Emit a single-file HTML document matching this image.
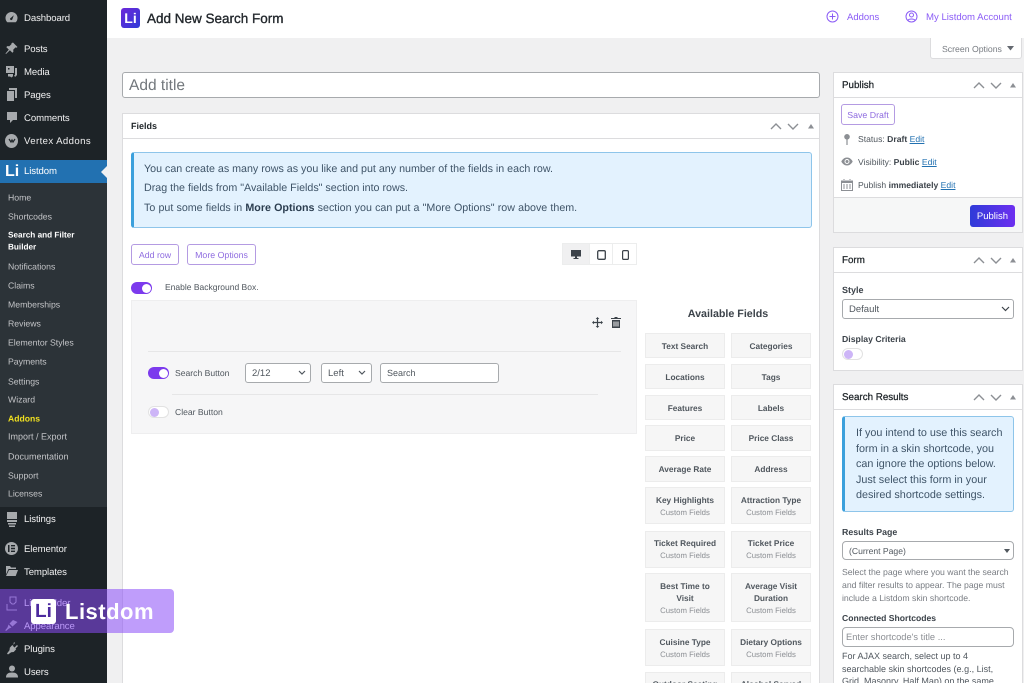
<!DOCTYPE html>
<html><head><meta charset="utf-8"><title>Add New Search Form</title>
<style>
*{box-sizing:border-box}
html,body{margin:0;padding:0;width:1024px;height:683px;overflow:hidden}
body{background:#f0f0f1;font-family:"Liberation Sans",sans-serif;color:#3c434a;text-rendering:geometricPrecision}
#w{position:absolute;left:0;top:0;width:1024px;height:683px;overflow:hidden;background:#f0f0f1;filter:blur(.3px)}
.a,.t{position:absolute}
.t{white-space:nowrap;line-height:14px}
.m{color:#f0f0f1;font-size:9.6px;left:24px;letter-spacing:-.1px;transform:translateY(1px)}
.s{color:#c3c4c7;font-size:8.7px;left:8px;line-height:12px;transform:translateY(.5px)}
.b{background:#fff;border:1px solid #dcdcde}
.pb{position:absolute;background:#fff;border:1px solid #b49be2;border-radius:3px;color:#8f6ce0;font-size:8.800px;text-align:center}
.f{position:absolute;width:80px;background:#f6f6f6;border:1px solid #ececec;text-align:center;font-size:8.300px;font-weight:bold;color:#50575e;line-height:12px}
.f small{display:block;font-weight:normal;font-size:7.800px;color:#8c8f94;margin-top:.7px}
.in{position:absolute;background:#fff;border:1px solid #a7aaad;border-radius:3px;font-size:9.500px;color:#50575e;padding-left:6px}
.ic{position:absolute;fill:#a7aaad}
.ch{position:absolute;fill:none;stroke:#8c8f94;stroke-width:1.4}
.lk{color:#2271b1;text-decoration:underline}
.tg{position:absolute;width:21px;height:12px;border-radius:6px;background:#7c3aed}
.tg i{position:absolute;right:1.5px;top:1.5px;width:9px;height:9px;border-radius:50%;background:#fff}
.tg.off{background:#fff;border:1px solid #e2e2e2}
.tg.off i{left:1px;right:auto;top:1px;background:#cdb5f7}
</style></head><body>
<div id="w">

<!-- Sidebar -->
<div class="a" style="left:0;top:0;width:107px;height:683px;background:#1d2327"></div>
<div class="a" style="left:0;top:183px;width:107px;height:324px;background:#2c3338"></div>
<div class="a" style="left:0;top:160px;width:107px;height:23px;background:#2271b1"></div>
<svg class="a" style="left:101px;top:166px" width="6" height="12"><path d="M6 0L0 6l6 6z" fill="#f0f0f1"/></svg>

<svg class="ic" style="left:5px;top:11px" width="13" height="13" viewBox="0 0 13 13"><path d="M6.500 1a6 6 0 0 0-6 6c0 1.700.7 3.200 1.800 4.300h8.400A6 6 0 0 0 12.500 7a6 6 0 0 0-6-6zm.8 7.500a1.200 1.200 0 1 1-1.300-1.800l2.800-2.500z"/></svg>
<div class="t m" style="top:11px">Dashboard</div>
<svg class="ic" style="left:5px;top:42px" width="13" height="13" viewBox="0 0 13 13"><path d="M8 .5l4.500 4.500-1 .7-1-.3-2.300 2.300.2 2-1 1-2.500-2.500L1 12l-.5-.5 3.300-3.900L1.300 5.100l1-1 2 .2L6.600 2 6.400 1.200z"/></svg>
<div class="t m" style="top:42px">Posts</div>
<svg class="ic" style="left:5px;top:65px" width="13" height="13" viewBox="0 0 13 13"><path d="M1 1h8v7H1zM3 3v1.500h1.500V3zM10 3h2v7l-1.500 1.800L9 11l.7-1H10zM3 9h5v2.200L6.500 12.500 5 11.500H3z"/></svg>
<div class="t m" style="top:65px">Media</div>
<svg class="ic" style="left:6px;top:88px" width="12" height="13" viewBox="0 0 12 13"><path d="M3 0h8v10H9V2H3zM1 3h7v10H1z"/></svg>
<div class="t m" style="top:88px">Pages</div>
<svg class="ic" style="left:6px;top:111px" width="12" height="13" viewBox="0 0 12 13"><path d="M1 1h10v8H7l-3 3V9H1z"/></svg>
<div class="t m" style="top:111px">Comments</div>
<div class="a" style="left:5px;top:134px;width:13px;height:14px;border-radius:50%;background:#a7aaad"></div>
<svg class="a" style="left:8px;top:138px" width="8" height="6"><path d="M1 1l2 3 1-2 1 2 2-3" fill="none" stroke="#1d2327" stroke-width="1.200"/></svg>
<div class="t m" style="top:134px;letter-spacing:.4px">Vertex Addons</div>
<div class="t" style="left:5px;top:163px;color:#fff;font-size:16px;font-weight:bold;line-height:18px">Li</div>
<div class="t m" style="top:164px;color:#fff">Listdom</div>

<div class="t s" style="top:191px">Home</div>
<div class="t s" style="top:210px">Shortcodes</div>
<div class="t s" style="top:229px;color:#fff;font-weight:bold;font-size:8.200px">Search and Filter</div>
<div class="t s" style="top:241px;color:#fff;font-weight:bold;font-size:8.200px">Builder</div>
<div class="t s" style="top:260px">Notifications</div>
<div class="t s" style="top:279px">Claims</div>
<div class="t s" style="top:298px">Memberships</div>
<div class="t s" style="top:317px">Reviews</div>
<div class="t s" style="top:336px">Elementor Styles</div>
<div class="t s" style="top:355px">Payments</div>
<div class="t s" style="top:375px">Settings</div>
<div class="t s" style="top:393px">Wizard</div>
<div class="t s" style="top:412px;color:#f0e020;font-weight:bold;font-size:8.600px">Addons</div>
<div class="t s" style="top:430px;font-size:9px">Import / Export</div>
<div class="t s" style="top:450px;font-size:9px">Documentation</div>
<div class="t s" style="top:469px">Support</div>
<div class="t s" style="top:487px">Licenses</div>

<svg class="ic" style="left:6px;top:512px" width="12" height="15" viewBox="0 0 12 15"><path d="M1 0h10v7H1zM3 2l3 2 3-2v1L6 5 3 3zM1 8h10v2H1zM2 11h8v1.500H2zM3 13.500h6V15H3z"/></svg>
<div class="t m" style="top:512px">Listings</div>
<div class="a" style="left:5px;top:542px;width:13px;height:13px;border-radius:50%;background:#a7aaad"></div>
<svg class="a" style="left:8px;top:545px" width="7" height="7"><path d="M0 0h1.500v7H0zM3 0h4v1.400H3zM3 2.800h4v1.400H3zM3 5.600h4V7H3z" fill="#1d2327"/></svg>
<div class="t m" style="top:542px">Elementor</div>
<svg class="ic" style="left:6px;top:565px" width="12" height="12" viewBox="0 0 12 12"><path d="M0 1h4l1 1.500h5V4H2.500L0 9.500zM3 5h9l-2.300 6H0z"/></svg>
<div class="t m" style="top:565px">Templates</div>
<svg class="ic" style="left:6px;top:596px;fill:none;stroke:#a7aaad" width="12" height="15" viewBox="0 0 12 15"><path d="M4 1h6v5l-2 2H6L4 6zM1 8v6h10"/></svg>
<div class="t m" style="top:596px">LinkBuilder</div>
<svg class="ic" style="left:5px;top:619px" width="13" height="13" viewBox="0 0 13 13"><path d="M12.500 3L8 1 4.500 4.500l3 3zM3.500 5.500l3 3-2.500 1-3 2.500-.7-.7L2.500 8.500z"/></svg>
<div class="t m" style="top:619px">Appearance</div>
<svg class="ic" style="left:6px;top:642px" width="12" height="13" viewBox="0 0 12 13"><path d="M8 0l1 1-2.500 2.500 2 2L11 3l1 1-2.500 2.500.7.700-2.500 2.800-2.500.300L2 12.500 1 11.500l2.500-3.200.3-2.500L6.300 3l.700.700z"/></svg>
<div class="t m" style="top:642px">Plugins</div>
<svg class="ic" style="left:6px;top:665px" width="12" height="13" viewBox="0 0 12 13"><circle cx="6" cy="3.500" r="3"/><path d="M0 12.500c0-3.500 2-5 6-5s6 1.500 6 5z"/></svg>
<div class="t m" style="top:665px">Users</div>

<!-- Top bar -->
<div class="a" style="left:107px;top:0;width:917px;height:38px;background:#fff"></div>
<div class="a" style="left:121px;top:8px;width:19px;height:20px;border-radius:3px;background:linear-gradient(135deg,#6d28d9,#2f3bd8);color:#fff;font-weight:bold;font-size:14px;line-height:20px;text-align:center">Li</div>
<div class="t" style="left:147px;top:10px;font-size:13.500px;line-height:17px;color:#23282d;-webkit-text-stroke:.35px #23282d">Add New Search Form</div>
<svg class="a" style="left:826px;top:10px" width="13" height="13" viewBox="0 0 13 13" fill="none" stroke="#8b5cf6"><circle cx="6.500" cy="6.500" r="5.500"/><path d="M6.500 3.500v6M3.500 6.500h6"/></svg>
<div class="t" style="left:847px;top:11px;font-size:9.500px;color:#8b5cf6">Addons</div>
<svg class="a" style="left:905px;top:10px" width="13" height="13" viewBox="0 0 13 13" fill="none" stroke="#8b5cf6"><circle cx="6.500" cy="6.500" r="5.500"/><circle cx="6.500" cy="5" r="2"/><path d="M2.800 10.500c1-2 6.400-2 7.400 0"/></svg>
<div class="t" style="left:926px;top:11px;font-size:9.600px;color:#8b5cf6">My Listdom Account</div>

<div class="a" style="left:930px;top:38px;width:92px;height:21px;background:#fff;border:1px solid #dcdcde;border-top:0;border-radius:0 0 3px 3px"></div>
<div class="t" style="left:942px;top:42px;font-size:8.700px;color:#787c82">Screen Options</div>
<svg class="a" style="left:1007px;top:46px" width="7" height="5"><path d="M0 0h7L3.500 4.500z" fill="#646970"/></svg>

<!-- Title -->
<div class="a" style="left:122px;top:72px;width:698px;height:26px;background:#fff;border:1px solid #a7aaad;border-radius:3px;font-size:15.500px;line-height:25px;color:#72777c;padding-left:6px">Add title</div>

<!-- Fields box -->
<div class="a b" style="left:122px;top:113px;width:698px;height:580px"></div>
<div class="a" style="left:123px;top:138px;width:696px;height:1px;background:#dcdcde"></div>
<div class="t" style="left:131px;top:119px;font-size:9px;font-weight:bold;color:#1d2327">Fields</div>
<svg class="ch" style="left:770px;top:122px" width="12" height="9"><path d="M1 7l5-5 5 5"/></svg>
<svg class="ch" style="left:787px;top:122px" width="12" height="9"><path d="M1 2l5 5 5-5"/></svg>
<svg class="a" style="left:808px;top:124px" width="6" height="5"><path d="M0 4.500L3 0l3 4.500z" fill="#8c8f94"/></svg>

<div class="a" style="left:131px;top:152px;width:681px;height:76px;background:#e3f2fe;border:1px solid #8ec5ea;border-left:3px solid #3ba0dc;border-radius:3px"></div>
<div class="t" style="left:144px;top:162px;font-size:10.700px;color:#3f5468">You can create as many rows as you like and put any number of the fields in each row.</div>
<div class="t" style="left:144px;top:181px;font-size:10.700px;color:#3f5468">Drag the fields from "Available Fields" section into rows.</div>
<div class="t" style="left:144px;top:201px;font-size:10.700px;color:#3f5468;word-spacing:.2px">To put some fields in <b style="color:#2c3e50">More Options</b> section you can put a "More Options" row above them.</div>

<div class="pb" style="left:131px;top:244px;width:48px;height:21px;line-height:20px">Add row</div>
<div class="pb" style="left:187px;top:244px;width:69px;height:21px;line-height:20px">More Options</div>

<div class="a" style="left:562px;top:243px;width:75px;height:22px;background:#fff;border:1px solid #eceded"></div>
<div class="a" style="left:563px;top:244px;width:26px;height:20px;background:#f0f0f1"></div>
<div class="a" style="left:612px;top:244px;width:1px;height:20px;background:#eceded"></div>
<div class="a" style="left:589px;top:244px;width:1px;height:20px;background:#eceded"></div>
<svg class="a" style="left:571px;top:250px" width="10" height="9" viewBox="0 0 10 9"><path d="M0 0h10v6.500H6V8h1.500v1h-5V8H4V6.500H0z" fill="#3c434a"/></svg>
<svg class="a" style="left:597px;top:250px" width="9" height="10" viewBox="0 0 9 10" fill="none" stroke="#3c434a" stroke-width="1.300"><rect x=".7" y=".7" width="7.600" height="8.600" rx="1.200"/></svg>
<svg class="a" style="left:622px;top:250px" width="7" height="10" viewBox="0 0 7 10" fill="none" stroke="#3c434a" stroke-width="1.200"><rect x=".6" y=".6" width="5.800" height="8.800" rx="1.200"/></svg>

<div class="tg" style="left:131px;top:282px"><i></i></div>
<div class="t" style="left:165px;top:280px;font-size:8.500px;color:#50575e">Enable Background Box.</div>

<!-- Row area -->
<div class="a" style="left:131px;top:300px;width:506px;height:134px;background:#f6f6f7;border:1px solid #eeeeef"></div>
<svg class="a" style="left:592px;top:317px" width="11" height="11" viewBox="0 0 11 11"><path d="M5.500 0L7.300 2H6.100v2.900H9V3.700l2 1.800-2 1.800V6.100H6.100V9h1.200L5.500 11 3.700 9h1.200V6.100H2v1.200L0 5.500l2-1.800v1.200h2.900V2H3.700z" fill="#3c434a"/></svg>
<svg class="a" style="left:611px;top:317px" width="10" height="11" viewBox="0 0 10 11"><path d="M3.500 0h3v1H10v1H0V1h3.500zM1 3h8v8H1zm1.500 1.500v5h1v-5zm2 0v5h1v-5zm2 0v5h1v-5z" fill="#3c434a" fill-rule="evenodd"/></svg>
<div class="a" style="left:148px;top:351px;width:473px;height:1px;background:#e6e6e7"></div>
<div class="a" style="left:172px;top:394px;width:426px;height:1px;background:#e6e6e7"></div>

<div class="tg" style="left:148px;top:367px"><i></i></div>
<div class="t" style="left:175px;top:366px;font-size:8.600px;color:#50575e">Search Button</div>
<div class="in" style="left:245px;top:363px;width:66px;height:20px;line-height:19px">2/12</div>
<svg class="ch" style="left:298px;top:370px;stroke:#50575e;stroke-width:1.200" width="8" height="6"><path d="M1 1l3 3 3-3"/></svg>
<div class="in" style="left:321px;top:363px;width:51px;height:20px;line-height:19px">Left</div>
<svg class="ch" style="left:358px;top:370px;stroke:#50575e;stroke-width:1.200" width="8" height="6"><path d="M1 1l3 3 3-3"/></svg>
<div class="in" style="left:380px;top:363px;width:119px;height:20px;line-height:19px;font-size:9px">Search</div>

<div class="tg off" style="left:148px;top:406px"><i></i></div>
<div class="t" style="left:175px;top:405px;font-size:8.600px;color:#50575e">Clear Button</div>

<!-- Available fields -->
<div class="t" style="left:645px;width:166px;text-align:center;top:307px;font-size:10.700px;font-weight:bold;color:#3c434a">Available Fields</div>
<div class="f" style="left:645px;top:333px;height:25px;line-height:24px">Text Search</div>
<div class="f" style="left:731px;top:333px;height:25px;line-height:24px">Categories</div>
<div class="f" style="left:645px;top:364px;height:25px;line-height:24px">Locations</div>
<div class="f" style="left:731px;top:364px;height:25px;line-height:24px">Tags</div>
<div class="f" style="left:645px;top:395px;height:25px;line-height:24px">Features</div>
<div class="f" style="left:731px;top:395px;height:25px;line-height:24px">Labels</div>
<div class="f" style="left:645px;top:425px;height:26px;line-height:25px">Price</div>
<div class="f" style="left:731px;top:425px;height:26px;line-height:25px">Price Class</div>
<div class="f" style="left:645px;top:456px;height:26px;line-height:25px">Average Rate</div>
<div class="f" style="left:731px;top:456px;height:26px;line-height:25px">Address</div>
<div class="f" style="left:645px;top:487px;height:37px;padding-top:6px">Key Highlights<small>Custom Fields</small></div>
<div class="f" style="left:731px;top:487px;height:37px;padding-top:6px">Attraction Type<small>Custom Fields</small></div>
<div class="f" style="left:645px;top:531px;height:37px;padding-top:5px">Ticket Required<small>Custom Fields</small></div>
<div class="f" style="left:731px;top:531px;height:37px;padding-top:5px">Ticket Price<small>Custom Fields</small></div>
<div class="f" style="left:645px;top:573px;height:49px;padding-top:6px">Best Time to<br>Visit<small>Custom Fields</small></div>
<div class="f" style="left:731px;top:573px;height:49px;padding-top:6px">Average Visit<br>Duration<small>Custom Fields</small></div>
<div class="f" style="left:645px;top:629px;height:37px;padding-top:6px">Cuisine Type<small>Custom Fields</small></div>
<div class="f" style="left:731px;top:629px;height:37px;padding-top:6px">Dietary Options<small>Custom Fields</small></div>
<div class="f" style="left:645px;top:672px;height:30px;padding-top:5px">Outdoor Seating</div>
<div class="f" style="left:731px;top:672px;height:30px;padding-top:5px">Alcohol Served</div>

<!-- Publish -->
<div class="a b" style="left:833px;top:72px;width:190px;height:161px"></div>
<div class="a" style="left:834px;top:97px;width:188px;height:1px;background:#dcdcde"></div>
<div class="t" style="left:842px;top:79px;font-size:9.800px;color:#1d2327;-webkit-text-stroke:.25px #1d2327">Publish</div>
<svg class="ch" style="left:973px;top:81px" width="12" height="9"><path d="M1 7l5-5 5 5"/></svg>
<svg class="ch" style="left:990px;top:81px" width="12" height="9"><path d="M1 2l5 5 5-5"/></svg>
<svg class="a" style="left:1010px;top:83px" width="6" height="5"><path d="M0 4.500L3 0l3 4.500z" fill="#8c8f94"/></svg>
<div class="pb" style="left:841px;top:104px;width:54px;height:21px;line-height:20px">Save Draft</div>
<svg class="a" style="left:844px;top:134px" width="6" height="11" viewBox="0 0 6 11"><circle cx="3" cy="2.800" r="2.800" fill="#8c8f94"/><path d="M2.400 5h1.200v6H2.400z" fill="#8c8f94"/></svg>
<div class="t" style="left:858px;top:132px;font-size:8.600px;color:#50575e">Status: <b style="color:#3c434a">Draft</b> <span class="lk">Edit</span></div>
<svg class="a" style="left:841px;top:157px" width="12" height="9" viewBox="0 0 12 9"><path d="M6 .5C3.500.5 1.500 2.200.3 4.500 1.500 6.800 3.500 8.500 6 8.500s4.500-1.700 5.700-4C10.500 2.200 8.500.5 6 .5zm0 1.500a2.500 2.500 0 1 1 0 5 2.500 2.500 0 0 1 0-5z" fill="#8c8f94"/><circle cx="6" cy="4.500" r="1.500" fill="#8c8f94"/></svg>
<div class="t" style="left:858px;top:155px;font-size:8.600px;color:#50575e">Visibility: <b style="color:#3c434a">Public</b> <span class="lk">Edit</span></div>
<svg class="a" style="left:841px;top:179px" width="12" height="12" viewBox="0 0 12 12"><path d="M0 1.500h12V12H0zM1 4v7h10V4zM2.500 0h1v2h-1zM8.500 0h1v2h-1zM2.500 5h1v5h-1zM5.500 5h1v5h-1zM8.500 5h1v5h-1z" fill="#8c8f94" fill-rule="evenodd"/></svg>
<div class="t" style="left:858px;top:178px;font-size:8.600px;color:#50575e">Publish <b style="color:#3c434a">immediately</b> <span class="lk">Edit</span></div>
<div class="a" style="left:834px;top:197px;width:188px;height:35px;background:#f6f7f7;border-top:1px solid #dcdcde"></div>
<div class="a" style="left:970px;top:205px;width:45px;height:22px;border-radius:3px;background:linear-gradient(90deg,#2f3bd8,#6d2ff0);color:#fff;font-size:9.500px;line-height:23px;text-align:center">Publish</div>

<!-- Form -->
<div class="a b" style="left:833px;top:247px;width:190px;height:124px"></div>
<div class="a" style="left:834px;top:272px;width:188px;height:1px;background:#dcdcde"></div>
<div class="t" style="left:842px;top:254px;font-size:9.800px;color:#1d2327;-webkit-text-stroke:.25px #1d2327">Form</div>
<svg class="ch" style="left:973px;top:256px" width="12" height="9"><path d="M1 7l5-5 5 5"/></svg>
<svg class="ch" style="left:990px;top:256px" width="12" height="9"><path d="M1 2l5 5 5-5"/></svg>
<svg class="a" style="left:1010px;top:258px" width="6" height="5"><path d="M0 4.500L3 0l3 4.500z" fill="#8c8f94"/></svg>
<div class="t" style="left:842px;top:283px;font-size:9px;font-weight:bold;color:#3c434a">Style</div>
<div class="in" style="left:842px;top:299px;width:172px;height:20px;line-height:20px">Default</div>
<svg class="ch" style="left:1001px;top:306px;stroke:#3c434a;stroke-width:1.200" width="9" height="6"><path d="M1 1l3.500 3.500L8 1"/></svg>
<div class="t" style="left:842px;top:332px;font-size:8.700px;font-weight:bold;color:#3c434a">Display Criteria</div>
<div class="tg off" style="left:842px;top:348px"><i></i></div>

<!-- Search Results -->
<div class="a b" style="left:833px;top:384px;width:190px;height:310px"></div>
<div class="a" style="left:834px;top:409px;width:188px;height:1px;background:#dcdcde"></div>
<div class="t" style="left:842px;top:391px;font-size:9.800px;color:#1d2327;-webkit-text-stroke:.25px #1d2327">Search Results</div>
<svg class="ch" style="left:973px;top:393px" width="12" height="9"><path d="M1 7l5-5 5 5"/></svg>
<svg class="ch" style="left:990px;top:393px" width="12" height="9"><path d="M1 2l5 5 5-5"/></svg>
<svg class="a" style="left:1010px;top:395px" width="6" height="5"><path d="M0 4.500L3 0l3 4.500z" fill="#8c8f94"/></svg>
<div class="a" style="left:842px;top:416px;width:172px;height:96px;background:#e3f2fe;border:1px solid #8ec5ea;border-left:3px solid #3ba0dc;border-radius:3px"></div>
<div class="t" style="left:856px;top:426px;font-size:10.800px;line-height:15.500px;color:#3f5468">If you intend to use this search<br>form in a skin shortcode, you<br>can ignore the options below.<br>Just select this form in your<br>desired shortcode settings.</div>
<div class="t" style="left:842px;top:525px;font-size:8.800px;font-weight:bold;color:#3c434a">Results Page</div>
<div class="in" style="left:842px;top:541px;width:172px;height:19px;line-height:19px;font-size:8.600px;border-radius:4px">(Current Page)</div>
<svg class="a" style="left:1004px;top:549px" width="6" height="4"><path d="M0 0h6L3 4z" fill="#50575e"/></svg>
<div class="t" style="left:842px;top:566px;font-size:8.700px;line-height:13px;color:#787c82">Select the page where you want the search<br>and filter results to appear. The page must<br>include a Listdom skin shortcode.</div>
<div class="t" style="left:842px;top:611px;font-size:8.600px;font-weight:bold;color:#3c434a">Connected Shortcodes</div>
<div class="in" style="left:842px;top:627px;width:172px;height:20px;line-height:19px;font-size:9.300px;color:#8c8f94;border-radius:4px;padding-left:3px">Enter shortcode's title ...</div>
<div class="t" style="left:842px;top:650px;font-size:9px;line-height:12.500px;color:#50575e">For AJAX search, select up to 4<br>searchable skin shortcodes (e.g., List,<br>Grid, Masonry, Half Map) on the same</div>

<!-- Watermark -->
<div class="a" style="left:0;top:589px;width:174px;height:44px;background:rgba(139,77,247,.55);border-radius:0 4px 4px 0"></div>
<div class="a" style="left:31px;top:599px;width:25px;height:25px;background:#fff;border-radius:3px;color:#4c2a9e;font-weight:bold;font-size:19px;line-height:25px;text-align:center">Li</div>
<div class="t" style="left:65px;top:599px;font-size:22px;line-height:26px;font-weight:bold;color:#fff;letter-spacing:.5px">Listdom</div>
</div>
</body></html>
